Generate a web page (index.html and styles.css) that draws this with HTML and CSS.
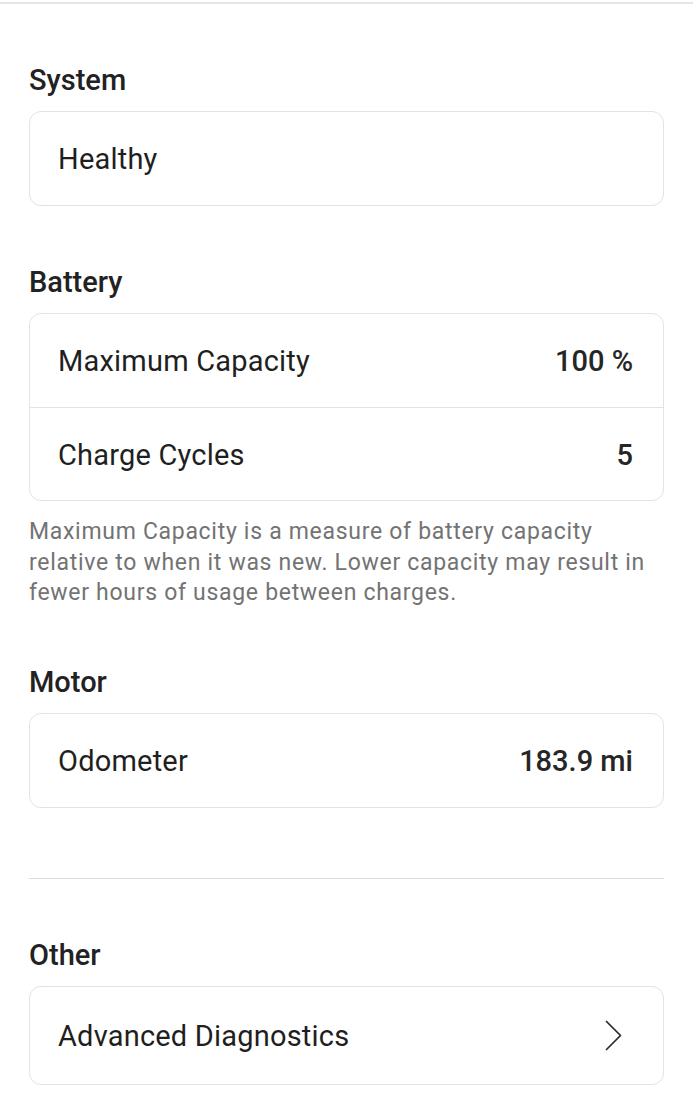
FILE: index.html
```html
<!DOCTYPE html>
<html lang="en">
<head>
<meta charset="utf-8">
<title>Battery</title>
<link rel="stylesheet" href="styles.css">
</head>
<body>
<div class="topline"></div>
<main class="page">
  <section class="section">
    <h2 class="heading">System</h2>
    <div class="card">
      <div class="row"><span class="label">Healthy</span></div>
    </div>
  </section>

  <section class="section">
    <h2 class="heading">Battery</h2>
    <div class="card">
      <div class="row"><span class="label">Maximum Capacity</span><span class="value">100 %</span></div>
      <div class="row"><span class="label">Charge Cycles</span><span class="value">5</span></div>
    </div>
    <p class="note">Maximum Capacity is a measure of battery capacity relative to when it was new. Lower capacity may result in fewer hours of usage between charges.</p>
  </section>

  <section class="section section-motor">
    <h2 class="heading">Motor</h2>
    <div class="card">
      <div class="row"><span class="label">Odometer</span><span class="value">183.9 mi</span></div>
    </div>
  </section>

  <hr class="divider">

  <section class="section section-other">
    <h2 class="heading">Other</h2>
    <div class="card">
      <div class="row row-link"><span class="label">Advanced Diagnostics</span>
        <svg class="chevron" width="17" height="31" viewBox="0 0 17 31" aria-hidden="true"><path d="M1.5 1.5 L15.5 15.5 L1.5 29.5" fill="none" stroke="#2a2a2a" stroke-width="1.7" stroke-linecap="round" stroke-linejoin="round"/></svg>
      </div>
    </div>
  </section>
</main>
</body>
</html>
```

FILE: styles.css
```css
* { box-sizing: border-box; }

html, body {
  margin: 0;
  padding: 0;
  background: #ffffff;
}

body {
  font-family: Roboto, "Liberation Sans", sans-serif;
  color: #1f1f1f;
}

.topline {
  height: 2px;
  margin-top: 2px;
  background: #e6e6e6;
}

.page {
  padding: 0 29px;
}

.section {
  display: flex;
  flex-direction: column;
}

.heading {
  margin: 58px 0 13px;
  font-size: 29px;
  line-height: 36px;
  font-weight: 500;
  color: #222;
}

.card {
  border: 1px solid #e3e3e3;
  border-radius: 12px;
  background: #fff;
}

.row {
  display: flex;
  align-items: center;
  justify-content: space-between;
  height: 93px;
  padding: 1px 30px 0 28px;
  font-size: 29px;
  line-height: 36px;
  letter-spacing: 0.2px;
}

.row + .row {
  border-top: 1px solid #e3e3e3;
}

.label {
  font-weight: 400;
  color: #1f1f1f;
}

.value {
  font-weight: 500;
  color: #262626;
  letter-spacing: 0;
}

.note {
  margin: 16px 0 0;
  font-size: 23px;
  line-height: 30.5px;
  letter-spacing: 0.7px;
  color: #737373;
}

.section-motor .heading {
  margin-top: 55px;
}

.divider {
  margin: 70px 0 0;
  border: 0;
  height: 1px;
  background: #dcdcdc;
}

.section-other .heading {
  margin-top: 58px;
}

.row-link {
  height: 97px;
  padding-right: 41px;
}

.chevron {
  display: block;
}
```
